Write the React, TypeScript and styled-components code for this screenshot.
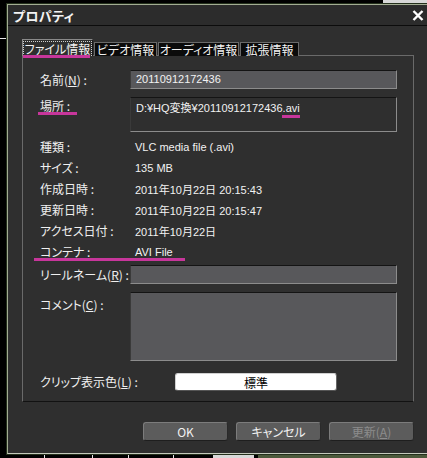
import React from 'react'
import styled, { createGlobalStyle, css } from 'styled-components'

const GlobalStyle = createGlobalStyle`
  html, body {
    margin: 0;
    padding: 0;
    background: #000;
  }
  body {
    font-family: "Noto Sans CJK JP", "Liberation Sans", sans-serif;
  }
`

const MARK = '#c7369b'

const info = [
  { label: '種類 :', value: 'VLC media file (.avi)' },
  { label: 'サイズ :', value: '135 MB' },
  { label: '作成日時 :', value: '2011年10月22日 20:15:43' },
  { label: '更新日時 :', value: '2011年10月22日 20:15:47' },
  { label: 'アクセス日付 :', value: '2011年10月22日' },
  { label: 'コンテナ :', value: 'AVI File', marked: true },
]

const tabs = [
  { name: 'ファイル情報', w: 71, active: true },
  { name: 'ビデオ情報', w: 63 },
  { name: 'オーディオ情報', w: 81 },
  { name: '拡張情報', w: 59 },
]

const App = () => {
  return (
    <StyledPage>
      <GlobalStyle />
      <Dialog>
        <TitleBar>
          <Title>プロパティ</Title>
          <CloseIcon width='12' height='11' viewBox='0 0 12 11'>
            <path d='M1.5 1 L10.5 10 M10.5 1 L1.5 10' stroke='#fff' strokeWidth='2.4' />
          </CloseIcon>
        </TitleBar>
        <Body>
          <TabRow>
            {tabs.map((t) => (
              <Tab key={t.name} $w={t.w} $active={!!t.active}>
                {t.active ? <FocusText>{t.name}</FocusText> : t.name}
              </Tab>
            ))}
          </TabRow>
          <Panel>
            <FieldRow $h={19}>
              <Label>名前(<u>N</u>) :</Label>
              <Field $h={19}>20110912172436</Field>
            </FieldRow>
            <FieldRow $h={35} $top>
              <Label $pad={1}><MarkedLabel>場所 :</MarkedLabel></Label>
              <Field $h={35} $readonly>
                D:¥HQ変換¥20110912172436<MarkedText>.avi</MarkedText>
              </Field>
            </FieldRow>
            <InfoList>
              {info.map((r) => (
                <InfoRow key={r.label} $marked={!!r.marked}>
                  <Label>{r.label}</Label>
                  <Value>{r.value}</Value>
                </InfoRow>
              ))}
            </InfoList>
            <FieldRow $h={19} $gap={3}>
              <Label>リールネーム(<u>R</u>) :</Label>
              <Field $h={19} />
            </FieldRow>
            <FieldRow $h={69} $top>
              <Label $pad={5}>コメント(<u>C</u>) :</Label>
              <Field $h={69} />
            </FieldRow>
            <FieldRow $h={18} $gap={12}>
              <Label $w={135}>クリップ表示色(<u>L</u>) :</Label>
              <ColorButton>標準</ColorButton>
            </FieldRow>
          </Panel>
          <ButtonRow>
            <Button>OK</Button>
            <Button>キャンセル</Button>
            <Button $disabled>更新(<u>A</u>)</Button>
          </ButtonRow>
        </Body>
      </Dialog>
    </StyledPage>
  )
}

export default App

const StyledPage = styled.div`
  width: 427px;
  height: 458px;
  overflow: hidden;
  box-sizing: border-box;
  padding: 4px 0 0 7px;
  background-color: #000;
  background-image:
    linear-gradient(#e8e8e8, #e8e8e8),
    linear-gradient(#e8e8e8, #e8e8e8),
    linear-gradient(#e8e8e8, #e8e8e8),
    linear-gradient(#e8e8e8, #e8e8e8),
    linear-gradient(#e8e8e8, #e8e8e8),
    linear-gradient(#d9d9d9, #d9d9d9),
    linear-gradient(#4d5a3c, #4d5a3c),
    linear-gradient(#d8d8d8, #d8d8d8);
  background-size: 6px 1px, 1px 6px, 1px 6px, 1px 6px, 1px 6px, 41px 6px, 170px 6px, 44px 4px;
  background-position: 0 38px, 44px 453px, 92px 453px, 128px 453px, 173px 453px, 213px 453px, 258px 453px, 383px 0;
  background-repeat: no-repeat;
`

const Dialog = styled.div`
  width: 424px;
  height: 450px;
  box-sizing: border-box;
  display: flex;
  flex-direction: column;
  background-color: #2f2f2f;
  border: 1px solid #a3ad93;
  border-bottom-color: #c4c9bc;
  box-shadow: 0 0 0 1px #24301c;
`

const TitleBar = styled.header`
  display: flex;
  justify-content: space-between;
  align-items: center;
  height: 20px;
  padding: 0 6px 0 5px;
  border-bottom: 1px solid #0c0c0c;
  background-color: #2c2c2c;
`

const Title = styled.h1`
  margin: 0;
  font-size: 13px;
  font-weight: 700;
  font-feature-settings: "palt";
  letter-spacing: 0.3px;
  color: #f4f4f4;
`

const CloseIcon = styled.svg`
  display: block;
  margin-top: 1px;
`

const Body = styled.div`
  display: flex;
  flex-direction: column;
  padding: 14px 0 0 14px;
`

const TabRow = styled.div`
  display: flex;
  align-items: flex-end;
  height: 16px;
  margin-bottom: -1px;
  position: relative;
  z-index: 1;
`

const Tab = styled.div<{ $w: number; $active: boolean }>`
  display: flex;
  align-items: center;
  justify-content: center;
  box-sizing: border-box;
  width: ${(p) => p.$w}px;
  height: 14px;
  margin-right: 1px;
  font-size: 12px;
  font-feature-settings: "palt";
  color: #f2f2f2;
  background-color: #0b0b0b;
  border: 1px solid #6a6a6a;
  border-bottom: none;

  ${(p) => p.$active && css`
    height: 17px;
    background-color: #2f2f2f;
    border-color: #8a8a8a;
    border-right-color: #1a1a1a;
  `}
`

const FocusText = styled.span`
  position: relative;
  padding: 0 1px;
  line-height: 13px;
  outline: 1px dotted #cfcfcf;

  &::after {
    content: '';
    position: absolute;
    left: -1px;
    right: 1px;
    bottom: -3px;
    height: 3px;
    background-color: ${MARK};
  }
`

const Panel = styled.div`
  display: flex;
  flex-direction: column;
  box-sizing: border-box;
  width: 392px;
  height: 347px;
  padding: 14px 0 0 17px;
  border: 1px solid #6a6a6a;
  border-bottom-color: #121212;
`

const FieldRow = styled.div<{ $h: number; $top?: boolean; $gap?: number }>`
  display: flex;
  align-items: ${(p) => (p.$top ? 'flex-start' : 'center')};
  height: ${(p) => p.$h}px;
  margin-top: ${(p) => p.$gap ?? 8}px;

  &:first-child {
    margin-top: 0;
  }
`

const Label = styled.div<{ $pad?: number; $w?: number }>`
  width: ${(p) => p.$w ?? 90}px;
  flex-shrink: 0;
  padding-top: ${(p) => p.$pad ?? 0}px;
  font-size: 12px;
  line-height: 16px;
  font-feature-settings: "palt";
  color: #f0f0f0;
  white-space: nowrap;

  u {
    text-underline-offset: 1px;
  }
`

const MarkedLabel = styled.span`
  position: relative;

  &::after {
    content: '';
    position: absolute;
    left: -2px;
    width: 39px;
    top: 15px;
    height: 3px;
    background-color: ${MARK};
  }
`

const Field = styled.div<{ $h: number; $readonly?: boolean }>`
  box-sizing: border-box;
  width: 267px;
  height: ${(p) => p.$h}px;
  padding: ${(p) => (p.$readonly ? '2px 5px' : '0 5px')};
  font-family: "Liberation Sans", "Noto Sans CJK JP", sans-serif;
  font-size: 11px;
  line-height: 17px;
  color: #f2f2f2;
  background-color: ${(p) => (p.$readonly ? '#2f2f2f' : '#58585b')};
  border: 1px solid #8c8c8c;
  border-top-color: #141414;
  border-left-color: #3a3a3a;
`

const MarkedText = styled.span`
  position: relative;

  &::after {
    content: '';
    position: absolute;
    left: -1px;
    right: 0;
    bottom: -4px;
    height: 3px;
    background-color: ${MARK};
  }
`

const InfoList = styled.div`
  display: flex;
  flex-direction: column;
  margin-top: 4px;
`

const InfoRow = styled.div<{ $marked: boolean }>`
  display: flex;
  align-items: center;
  height: 21px;
  position: relative;

  ${(p) => p.$marked && css`
    &::after {
      content: '';
      position: absolute;
      left: -6px;
      width: 151px;
      top: 17px;
      height: 3px;
      background-color: ${MARK};
    }
  `}
`

const Value = styled.div`
  padding-left: 5px;
  font-family: "Liberation Sans", "Noto Sans CJK JP", sans-serif;
  font-size: 11px;
  color: #f2f2f2;
  white-space: nowrap;
`

const ColorButton = styled.div`
  display: flex;
  align-items: center;
  justify-content: center;
  box-sizing: border-box;
  width: 162px;
  height: 18px;
  font-size: 12px;
  color: #000;
  background-color: #fff;
  border: 1px solid #d0d0d0;
  border-bottom-color: #555;
  border-right-color: #666;
  border-radius: 3px;
`

const ButtonRow = styled.div`
  display: flex;
  justify-content: flex-end;
  gap: 8px;
  width: 392px;
  margin-top: 20px;
`

const Button = styled.div<{ $disabled?: boolean }>`
  display: flex;
  align-items: center;
  justify-content: center;
  box-sizing: border-box;
  width: 85px;
  height: 19px;
  font-size: 12px;
  font-feature-settings: "palt";
  color: ${(p) => (p.$disabled ? '#8c8c8c' : '#f2f2f2')};
  background-color: #5c5c5c;
  border: 1px solid #7c7c7c;
  border-bottom-color: #1e1e1e;
  border-right-color: #2a2a2a;
  border-radius: 3px;

  u {
    text-underline-offset: 1px;
  }
`
